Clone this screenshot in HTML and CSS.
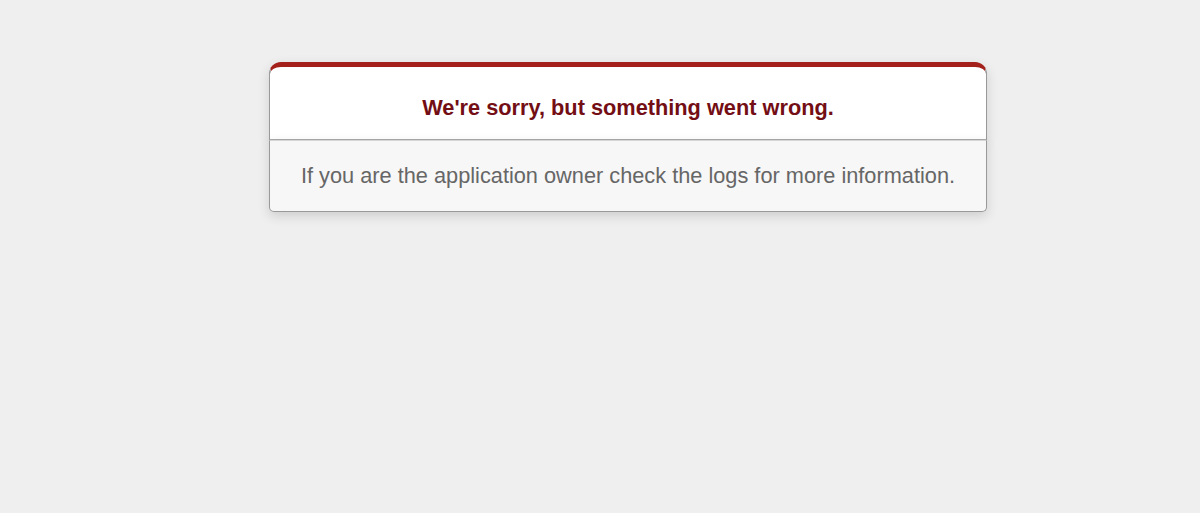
FILE: index.html
```html
<!DOCTYPE html>
<html lang="en">
    <head>
        <meta charset="UTF-8">
        <meta name="viewport" content="width=device-width, initial-scale=1.0">
        <title>We're sorry, but something went wrong (500)</title>
        <link rel="stylesheet" href="styles.css">
    </head>
    <body class="error-page">
        <div class="dialog">
            <div class="dialog-head">
                <h1>We're sorry, but something went wrong.</h1>
            </div>
            <p>If you are the application owner check the logs for more information.</p>
        </div>
    </body>
</html>
```

FILE: styles.css
```css
.error-page {
    background-color: #EFEFEF;
    color: #2E2F30;
    text-align: center;
    font-family: Arial, 'Liberation Sans', sans-serif;
    font-size: 21.75px;
    margin: 0;
}
.dialog {
    width: 718px;
    margin: 62px 0 0 269px;
}
.dialog-head {
    border: 1px solid #CCC;
    border-right-color: #999;
    border-left-color: #999;
    border-bottom-color: #AAA;
    border-top: #A3201B solid 5px;
    border-top-left-radius: 12px;
    border-top-right-radius: 12px;
    background-color: white;
    padding: 10px 12% 0;
    box-shadow: 0 4px 11px rgba(50, 50, 50, 0.17);
}
.dialog h1 {
    font-size: 100%;
    color: #730E15;
    line-height: 1.5em;
    margin: 0.67em 0;
}
.dialog p {
    margin: 0 0 1em;
    padding: 1em 1em 1.05em;
    background-color: #F7F7F7;
    border: 1px solid #CCC;
    border-right-color: #999;
    border-left-color: #999;
    border-bottom-color: #999;
    border-bottom-left-radius: 5px;
    border-bottom-right-radius: 5px;
    border-top-color: #D5D5D5;
    color: #666;
    box-shadow: 0 4px 11px rgba(50, 50, 50, 0.17);
}
```
